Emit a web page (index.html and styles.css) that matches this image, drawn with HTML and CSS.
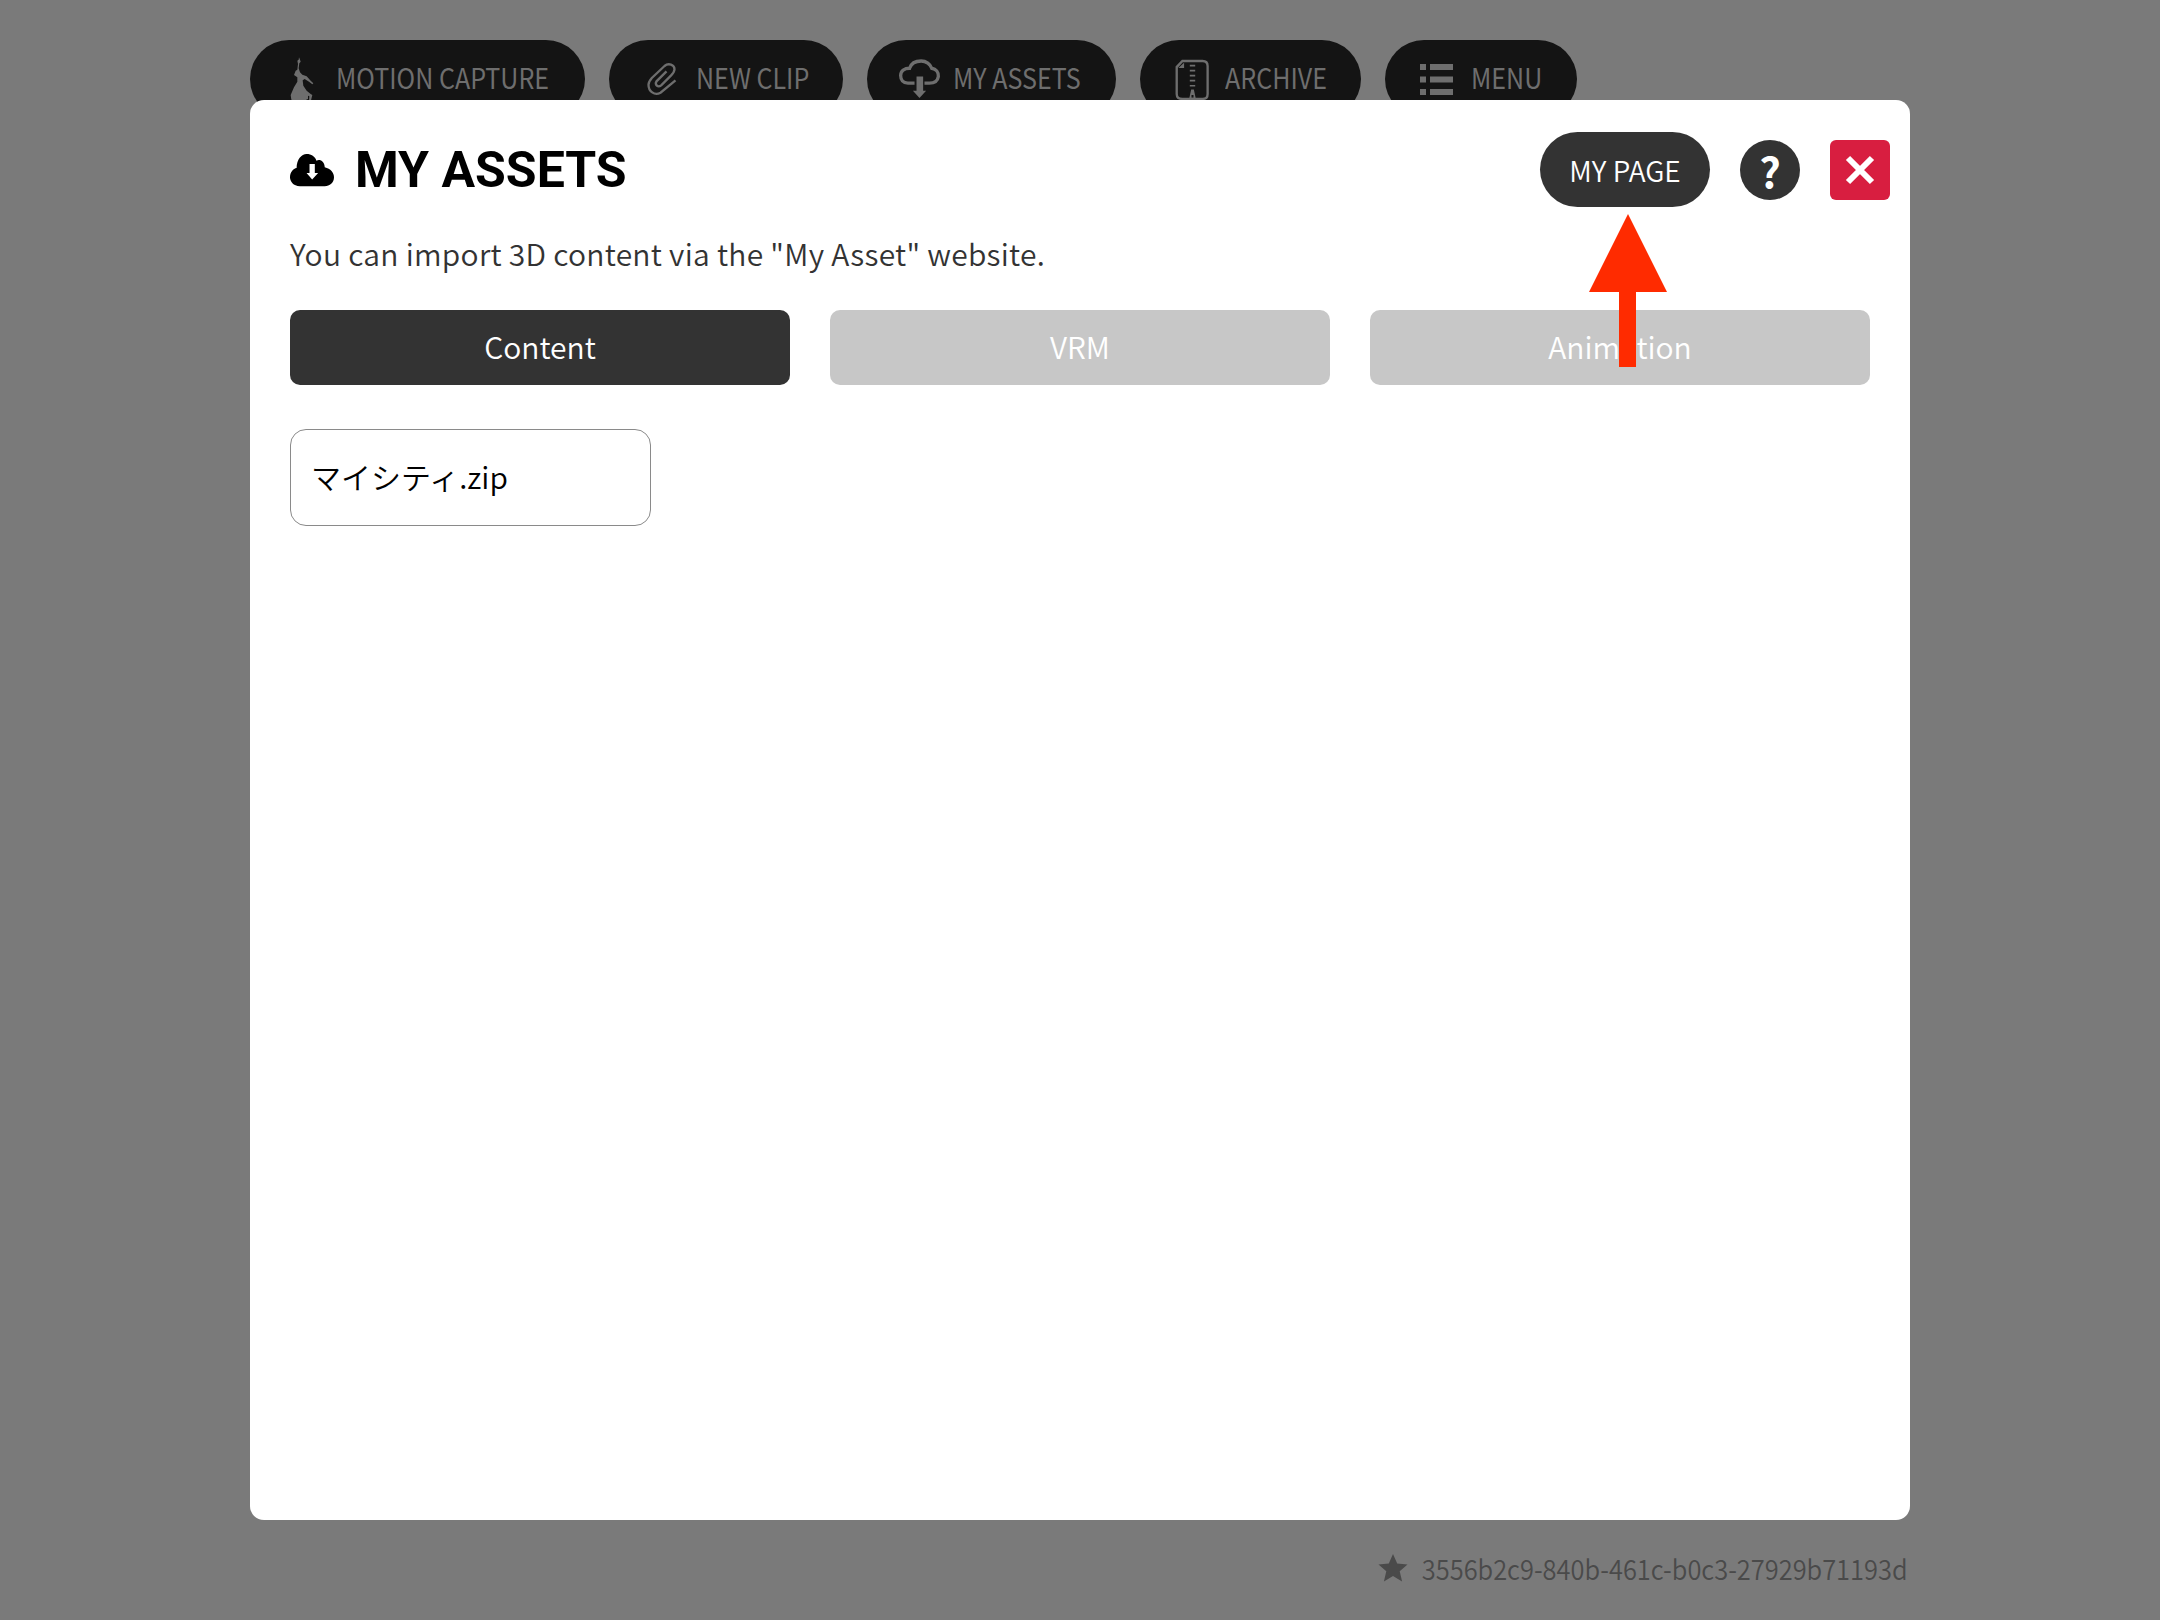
FILE: index.html
```html
<!DOCTYPE html>
<html lang="en">
<head>
<meta charset="utf-8">
<title>My Assets</title>
<link rel="stylesheet" href="styles.css">
</head>
<body>
<nav class="nav">
  <div class="pill pill-motion">
    <svg class="ico" width="24" height="45" viewBox="28 14 72 135"><path class="fill" d="M55 15L58 22 60 28 56 33 54 48 58 60 65 67 78 72 90 85 98 93 95 96 85 88 72 80 66 84 68 100 78 115 90 125 95 128 90 148 85 146 86 132 82 130 82 140 70 145 45 145 32 142 30 128 40 105 50 88 50 75 40 68 45 55 50 52 52 35 50 25 54 22z"/></svg>
    <span>MOTION CAPTURE</span>
  </div>
  <div class="pill pill-clip">
    <svg class="ico" width="32" height="35" viewBox="15 30 95 105"><path class="line" d="M103 85L58 122C40 132 22 118 22 98 22 90 26 85 32 78L70 42C82 32 100 38 100 52 100 60 96 64 90 70L60 100C50 108 40 98 46 88L76 58"/></svg>
    <span>NEW CLIP</span>
  </div>
  <div class="pill pill-assets">
    <svg class="ico" width="43" height="42" viewBox="20 20 130 125"><path class="line line-thick" d="M70 95H50C35 95 28 85 28 72 28 58 40 50 55 50 60 35 75 28 90 28 105 28 118 38 122 50 135 52 143 62 142 75 140 88 130 95 115 95H100"/><path class="fill" d="M76 75H96V118H105L85 140 65 118H76z"/></svg>
    <span>MY ASSETS</span>
  </div>
  <div class="pill pill-archive">
    <svg class="ico" width="37" height="43" viewBox="25 18 110 128"><path class="line" d="M50 27H110C120 27 125 33 125 42V125C125 135 120 140 110 140H50C40 140 33 135 33 125V45z"/><path class="fill" d="M38 48H55V32zM72 38H88V43H72zM72 53H88V58H72zM72 68H88V73H72zM72 83H88V88H72zM72 98H88V103H72zM76 112H84L90 140H70zM77 128V136H83V128z"/></svg>
    <span>ARCHIVE</span>
  </div>
  <div class="pill pill-menu">
    <svg class="ico" width="33" height="31" viewBox="0 0 33 31"><path class="fill" d="M0 0h6v6H0zM10 0h23v6H10zM0 12.500h6v6H0zM10 12.500h23v6H10zM0 25h6v6H0zM10 25h23v6H10z"/></svg>
    <span>MENU</span>
  </div>
</nav>
<main class="modal">
  <header class="modal-head">
    <svg class="title-ico" width="44" height="34" viewBox="15 25 133 102"><path d="M45 125C25 125 15 110 15 98 15 82 25 72 35 70 35 45 50 28 65 28 80 28 90 35 95 48 105 42 120 50 120 68 138 72 148 85 148 98 148 115 135 125 120 125z"/><path class="title-arrow" d="M74 58H90V85H100L82 105 65 85H74z"/></svg>
    <h1 class="title">MY ASSETS</h1>
    <div class="head-actions">
      <button class="mypage">MY PAGE</button>
      <button class="help">?</button>
      <button class="close"><svg width="30" height="30" viewBox="0 0 30 30"><path d="M3 3l24 24M27 3L3 27"/></svg></button>
    </div>
  </header>
  <p class="desc">You can import 3D content via the "My Asset" website.</p>
  <div class="tabs">
    <button class="tab tab-active"><span class="tab-label">Content</span></button>
    <button class="tab"><span class="tab-label">VRM</span></button>
    <button class="tab"><span class="tab-label">Animation</span></button>
  </div>
  <div class="file"><span class="file-name">マイシティ.zip</span></div>
  <svg class="arrow" width="78" height="153" viewBox="0 0 78 153"><path d="M39 0l39 78H47v75H30V78H0z"/></svg>
</main>
<footer class="foot">
  <svg width="30" height="30" viewBox="0 0 30 30"><path d="M15 1l4.200 9.600 10.300.9-7.800 6.800 2.400 10.200L15 23.100 5.900 28.500l2.400-10.200L.5 11.500l10.300-.9z"/></svg>
  <span class="foot-id">3556b2c9-840b-461c-b0c3-27929b71193d</span>
</footer>
</body>
</html>
```
FILE: styles.css
```css
* { box-sizing: border-box; }
html, body { margin: 0; height: 100%; }
body {
  background: #7a7a7a;
  padding: 40px 250px 0;
  font-family: "Noto Sans CJK JP", "Noto Sans", sans-serif;
  font-weight: 350;
  overflow: hidden;
}
.nav { display: flex; gap: 24px; height: 60px; }
.pill {
  height: 78px;
  border-radius: 39px;
  background: #141414;
  color: #6e6e6e;
  font-size: 28px;
  font-weight: 400;
  display: flex;
  align-items: center;
  flex: none;
}
.pill span {
  display: block;
  white-space: nowrap;
  padding-bottom: 5px;
  transform: scaleX(0.895);
  transform-origin: left center;
}
.pill-motion { width: 335px; padding-left: 40px; gap: 22px; }
.pill-clip { width: 234px; padding-left: 37px; gap: 18px; }
.pill-assets { width: 249px; padding-left: 31px; gap: 12px; }
.pill-archive { width: 221px; padding-left: 34px; gap: 14px; }
.pill-menu { width: 192px; padding-left: 35px; gap: 18px; }
.ico { flex: none; }
.fill { fill: #6e6e6e; fill-rule: evenodd; }
.line { fill: none; stroke: #6e6e6e; stroke-width: 7; }
.line-thick { stroke-width: 10; }
.modal {
  position: relative;
  height: 1420px;
  background: #fff;
  border-radius: 14px;
  padding: 32px 40px 0;
}
.modal-head { display: flex; align-items: center; height: 75px; }
.title-ico { fill: #000; margin-right: 21px; flex: none; }
.title-arrow { fill: #fff; }
.title {
  margin: 0;
  font-family: Roboto, sans-serif;
  font-weight: 700;
  font-size: 50px;
  line-height: 1;
  color: #000;
}
.head-actions { margin-left: auto; margin-right: -20px; display: flex; align-items: center; }
.head-actions button { border: 0; padding: 0; font-family: inherit; color: #fff; display: flex; align-items: center; justify-content: center; }
.mypage { width: 170px; height: 75px; border-radius: 38px; background: #333; font-size: 28px; font-weight: 350; }
.help { width: 60px; height: 60px; border-radius: 50%; background: #333; font-size: 42px; font-weight: 700; margin-left: 30px; }
.close { width: 60px; height: 60px; border-radius: 6px; background: #d81e40; margin-left: 30px; }
.close path { fill: none; stroke: #fff; stroke-width: 6; }
.desc { margin: 0; padding-top: 21px; font-size: 30px; line-height: 50px; color: #333; letter-spacing: 0.26px; }
.tabs { display: flex; gap: 40px; margin-top: 32px; width: 1580px; }
.tab {
  flex: 1;
  height: 75px;
  border: 0;
  border-radius: 10px;
  background: #c7c7c7;
  color: #fff;
  font-family: inherit;
  font-size: 30px;
  font-weight: 350;
}
.tab-label { display: block; padding-bottom: 3px; }
.tab-active { background: #333; }
.file {
  width: 361px;
  height: 97px;
  margin-top: 44px;
  padding: 0 20px;
  border: 1px solid #8a8a8a;
  border-radius: 16px;
  display: flex;
  align-items: center;
  font-size: 30px;
  color: #000;
}
.file-name { padding-bottom: 3px; }
.arrow { position: absolute; left: 1339px; top: 114px; fill: #ff2b00; }
.foot {
  display: flex;
  justify-content: flex-end;
  align-items: center;
  height: 40px;
  margin-top: 28px;
  padding-right: 2px;
  color: #4a4a4a;
  font-size: 28px;
}
.foot svg { fill: #4a4a4a; flex: none; margin-right: -36px; }
.foot-id { transform: scaleX(0.907); transform-origin: right center; }
```
